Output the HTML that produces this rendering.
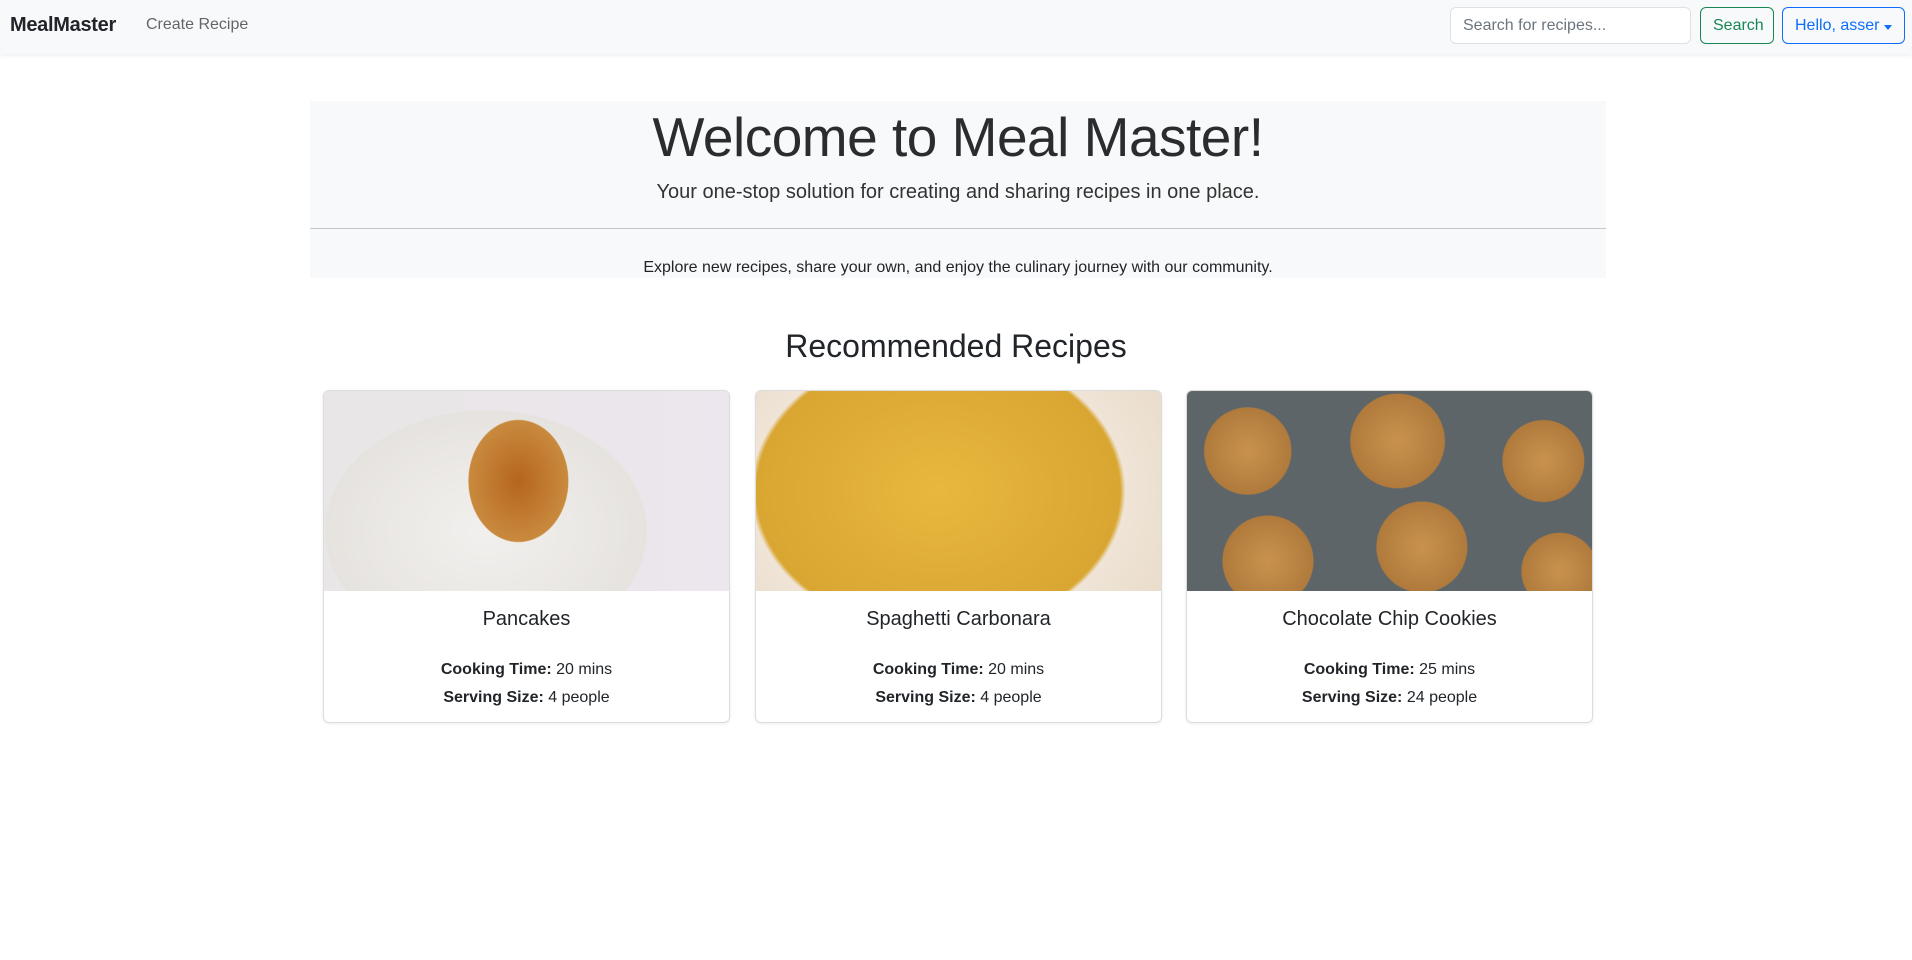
<!DOCTYPE html>
<html><head><style>
*{box-sizing:border-box;margin:0;padding:0}
body{width:1912px;height:960px;background:#fff;font-family:"Liberation Sans",sans-serif;color:#212529;overflow:hidden}
nav{height:54px;background:#f8f9fa;box-shadow:0 2px 4px rgba(0,0,0,.06);position:relative}
.brand{position:absolute;left:10px;top:14px;font-size:20px;font-weight:bold;letter-spacing:-0.3px}
.link{position:absolute;left:146px;top:16px;font-size:16px;color:rgba(0,0,0,.6)}
.inp{position:absolute;left:1450px;top:7px;width:241px;height:37px;border:1px solid #dee2e6;border-radius:6px;background:#fff;font-size:16px;color:#6c757d;padding:9px 12px}
.btn{position:absolute;top:7px;height:37px;border-radius:6px;font-size:16px;padding:9px 12px;white-space:nowrap}
.s{left:1700px;width:74px;border:1px solid #198754;color:#198754}
.h{left:1782px;width:123px;border:1px solid #0d6efd;color:#0d6efd}
.h:after{content:"";position:absolute;right:12px;top:17px;border-left:4px solid transparent;border-right:4px solid transparent;border-top:5px solid #0d6efd}
.jumbo{position:absolute;left:310px;top:101px;width:1296px;height:177px;background:#f8f9fa;text-align:center}
h1{font-weight:300;font-size:55px;position:absolute;top:4px;width:100%;letter-spacing:-0.5px;color:#2a2d30}
.lead{position:absolute;top:80px;width:100%;font-size:20px;font-weight:300;color:#333}
.hr{position:absolute;top:127px;left:0;width:100%;height:1px;background:#c4c6c8}
.p2{position:absolute;top:158px;width:100%;font-size:16px}
h2{position:absolute;top:328px;width:100%;text-align:center;font-size:32px;font-weight:500}
.card{position:absolute;top:390px;width:407px;height:333px;border:1px solid #dcdcdc;border-radius:6px;overflow:hidden;box-shadow:0 1px 3px rgba(0,0,0,.08);text-align:center}
.img{height:200px}
.t{font-size:20px;margin-top:17px}
.m{font-size:16px;margin-top:25px;line-height:28px}
</style></head><body>
<nav><div class="brand">MealMaster</div><div class="link">Create Recipe</div>
<div class="inp">Search for recipes...</div><div class="btn s">Search</div><div class="btn h">Hello, asser</div></nav>
<div class="jumbo"><h1>Welcome to Meal Master!</h1><div class="lead">Your one-stop solution for creating and sharing recipes in one place.</div><div class="hr"></div><div class="p2">Explore new recipes, share your own, and enjoy the culinary journey with our community.</div></div>
<h2>Recommended Recipes</h2>
<div class="card" style="left:323px"><div class="img" style="background:radial-gradient(ellipse 90px 110px at 48% 45%,#b5651d 0,#c98a3e 55%,transparent 56%),radial-gradient(ellipse 200px 150px at 40% 70%,#f2f0ee 0,#e6e3df 80%,transparent 81%),linear-gradient(90deg,#e8e6e6,#ece6ee)"></div><div class="t">Pancakes</div><div class="m"><b>Cooking Time:</b> 20 mins<br><b>Serving Size:</b> 4 people</div></div>
<div class="card" style="left:755px"><div class="img" style="background:radial-gradient(ellipse 260px 200px at 45% 50%,#e8b83e 0,#d9a632 70%,#efe4d6 72%,#e9dccb 100%)"></div><div class="t">Spaghetti Carbonara</div><div class="m"><b>Cooking Time:</b> 20 mins<br><b>Serving Size:</b> 4 people</div></div>
<div class="card" style="left:1186px"><div class="img" style="background:radial-gradient(circle 48px at 15% 30%,#c8924e 0,#b07a3c 90%,transparent 92%),radial-gradient(circle 52px at 52% 25%,#c8924e 0,#b07a3c 90%,transparent 92%),radial-gradient(circle 45px at 88% 35%,#c8924e 0,#b07a3c 90%,transparent 92%),radial-gradient(circle 50px at 20% 85%,#c8924e 0,#b07a3c 90%,transparent 92%),radial-gradient(circle 50px at 58% 78%,#c8924e 0,#b07a3c 90%,transparent 92%),radial-gradient(circle 42px at 92% 90%,#c8924e 0,#b07a3c 90%,transparent 92%),#5e6568"></div><div class="t">Chocolate Chip Cookies</div><div class="m"><b>Cooking Time:</b> 25 mins<br><b>Serving Size:</b> 24 people</div></div>
</body></html>
